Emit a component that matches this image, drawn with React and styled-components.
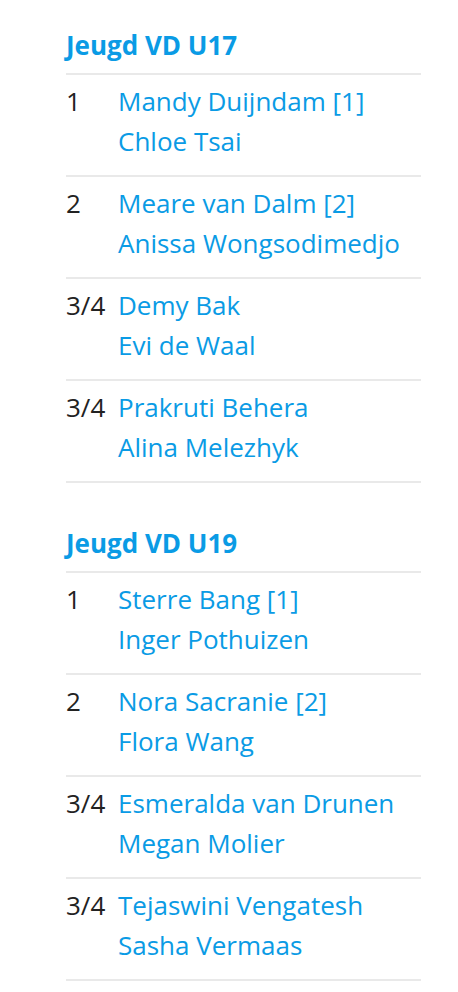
import React from "react";
import styled, { createGlobalStyle } from "styled-components";

const GlobalStyle = createGlobalStyle`
  body {
    margin: 0;
    background: #fff;
    font-family: "Open Sans", "Liberation Sans", sans-serif;
  }
`;

const draws = [
  {
    title: "Jeugd VD U17",
    results: [
      { place: "1", players: ["Mandy Duijndam [1]", "Chloe Tsai"] },
      { place: "2", players: ["Meare van Dalm [2]", "Anissa Wongsodimedjo"] },
      { place: "3/4", players: ["Demy Bak", "Evi de Waal"] },
      { place: "3/4", players: ["Prakruti Behera", "Alina Melezhyk"] },
    ],
  },
  {
    title: "Jeugd VD U19",
    results: [
      { place: "1", players: ["Sterre Bang [1]", "Inger Pothuizen"] },
      { place: "2", players: ["Nora Sacranie [2]", "Flora Wang"] },
      { place: "3/4", players: ["Esmeralda van Drunen", "Megan Molier"] },
      { place: "3/4", players: ["Tejaswini Vengatesh", "Sasha Vermaas"] },
    ],
  },
];

export default function App() {
  return (
    <>
      <GlobalStyle />
      <Page>
        {draws.map((d) => (
          <Draw key={d.title}>
            <Title>{d.title}</Title>
            <List>
              {d.results.map((r, i) => (
                <Row key={i}>
                  <Place>{r.place}</Place>
                  <Players>
                    {r.players.map((p) => (
                      <Player key={p} href="#">
                        {p}
                      </Player>
                    ))}
                  </Players>
                </Row>
              ))}
            </List>
          </Draw>
        ))}
      </Page>
    </>
  );
}

const Page = styled.main`
  width: 355px;
  padding: 27px 0 0 66px;
`;

const Draw = styled.section`
  & + & {
    margin-top: 42px;
  }
`;

const Title = styled.h2`
  margin: 0 0 10px;
  font-size: 26px;
  line-height: 36px;
  font-weight: 700;
  color: #0a9be5;
`;

const List = styled.ul`
  margin: 0;
  padding: 0;
  list-style: none;
  border-bottom: 2px solid #e9e9e9;
`;

const Row = styled.li`
  display: grid;
  grid-template-columns: 52px 1fr;
  border-top: 2px solid #e9e9e9;
  padding: 6px 0 14px;
  font-size: 26px;
  line-height: 40px;
`;

const Place = styled.span`
  color: #222;
`;

const Players = styled.div`
  display: flex;
  flex-direction: column;
`;

const Player = styled.a`
  color: #0a9be5;
  text-decoration: none;
`;
